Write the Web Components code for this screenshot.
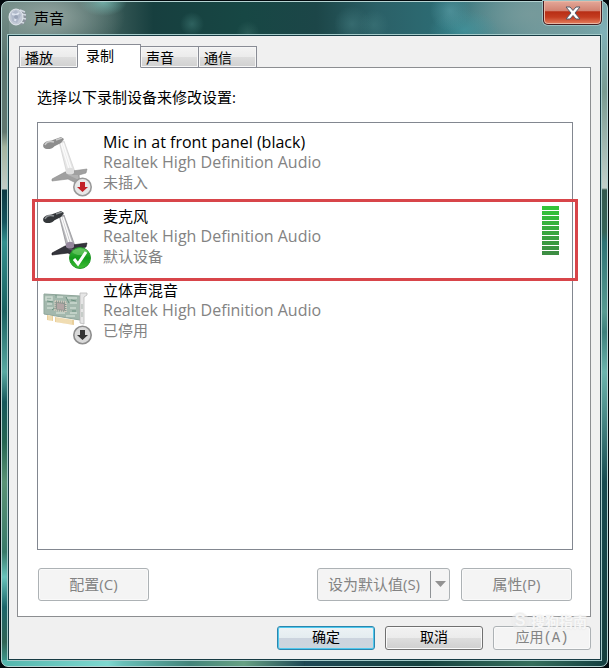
<!DOCTYPE html>
<html lang="zh-CN">
<head>
<meta charset="utf-8">
<title>声音</title>
<style>
  html { background: #02090d; }
  body { margin: 0; min-height: 100vh; display: flex; color: #000;
    font: 15px/20px "Open Sans", "Noto Sans CJK SC", sans-serif; }
</style>
</head>
<body>
<sound-window>
  <title-bar slot="title">声音</title-bar>
  <tab-strip slot="tabs">
    <tab-button>播放</tab-button>
    <tab-button selected>录制</tab-button>
    <tab-button>声音</tab-button>
    <tab-button>通信</tab-button>
  </tab-strip>
  <span slot="prompt">选择以下录制设备来修改设置:</span>
  <device-row icon="mic" state="unplugged" name="Mic in at front panel (black)" driver="Realtek High Definition Audio" status="未插入"></device-row>
  <device-row icon="mic" state="default" name="麦克风" driver="Realtek High Definition Audio" status="默认设备" level="10" marked></device-row>
  <device-row icon="card" state="disabled" name="立体声混音" driver="Realtek High Definition Audio" status="已停用"></device-row>
  <push-button slot="left" disabled>配置(C)</push-button>
  <split-button slot="right">设为默认值(S)</split-button>
  <push-button slot="right" disabled>属性(P)</push-button>
  <push-button slot="footer" kind="primary">确定</push-button>
  <push-button slot="footer" kind="dialog">取消</push-button>
  <push-button slot="footer" kind="dialog" disabled>应用(A)</push-button>
  <water-mark slot="mark">搜狗指南</water-mark>
</sound-window>

<script>
class Base extends HTMLElement {
  connectedCallback() {
    if (!this.shadowRoot) this.attachShadow({ mode: 'open' }).innerHTML = this.render();
  }
}

customElements.define('sound-window', class extends Base {
  render() { return `<style>
    :host { flex: 1; display: flex; flex-direction: column; margin: 1px; box-sizing: border-box; padding: 0 5px 5px;
      border: 1px solid #b5d3d2; border-radius: 7px; position: relative;
      background:
        linear-gradient(90deg, #53b5ac, #7ed8d0 35%, #69bfb8 40%, #42847a 62%, #67a184 80%, #1d4854) left bottom / 50% 6px no-repeat,
        linear-gradient(90deg, #1d4854, #164340 40%, #356e5c 75%, #123e40) right bottom / 50% 6px no-repeat,
        linear-gradient(#74a5a9 0, #80b1b8 30px, #799b91 90px, #c3d0cb 186px, #34594f 188px, #366458 230px, #2e7375 240px, #589b92 310px, #3d807c 330px, #6db5ae 370px, #174b50 480px, #163e3c) right top / 7px 100% no-repeat,
        linear-gradient(#77908a 0, #5a756f 60px, #61776f 130px, #a4b49f 145px, #c2ccc7 187px, #0d3a43 188px, #15545d 220px, #34918f 240px, #19605f 310px, #5aaaa3 370px, #16585b 400px, #256652 440px, #5b9376 480px, #397a69 550px, #68c4bc 575px, #1b666a 605px, #306455 640px, #42a69c) left top / 7px 100% no-repeat,
        radial-gradient(ellipse 75px 42px at 48px 15px, #a2b1acd0, transparent),
        radial-gradient(ellipse 24px 14px at 101px 0px, #66aaa3, transparent),
        radial-gradient(circle 12px at 190px 22px, #3c7470a0, transparent),
        radial-gradient(circle 12px at 246px 31px, #35676290, transparent),
        radial-gradient(circle 18px at 350px 22px, #40777ba0, transparent),
        radial-gradient(circle 15px at 372px 23px, #3f787b90, transparent),
        radial-gradient(circle 20px at 448px 9px, #579ba4b0, transparent),
        radial-gradient(ellipse 35px 20px at 462px 28px, #4599a2b0, transparent),
        radial-gradient(ellipse 90px 45px at 530px 12px, #769a9b, transparent),
        linear-gradient(90deg, #65827d, #3a5b58 18%, #173f3f 25%, #174744 40%, #1c4648 52%, #2b6067 62%, #2d7078 76%, #69969a 88%, #78a9ad); }
    .client { flex: 1; display: flex; flex-direction: column; background: #f0f0f0; padding: 8px 9px 9px 8px;
      border: 1px solid #173b43; outline: 1px solid #a5cbca; margin: 0 1px 1px; }
    main { flex: 1; display: flex; flex-direction: column; background: #fff; border: 1px solid #8c8e91; padding: 19px 17px 15px 19px; }
    .list { flex: 1; border: 1px solid #828790; margin: 15px 0 18px; padding-top: 9px; }
    .row { display: flex; justify-content: space-between; padding: 0 1px; }
    .group, footer { display: flex; gap: 11px; }
    footer { justify-content: flex-end; gap: 10px; padding-top: 9px; }
    </style>
    <slot name="title"></slot>
    <div class="client">
      <slot name="tabs"></slot>
      <main><slot name="prompt"></slot>
        <div class="list" role="list"><slot></slot></div>
        <div class="row"><slot name="left"></slot><div class="group"><slot name="right"></slot></div></div>
      </main>
      <footer><slot name="footer"></slot></footer>
    </div><slot name="mark"></slot>`; }
});

customElements.define('title-bar', class extends Base {
  render() { return `<style>
    :host { display: flex; height: 33px; align-items: flex-start; }
    .icon { width: 20px; height: 20px; margin: 5px 0 0 1px; }
    span { flex: 1; padding: 6px 0 0 6px; }
    button { width: 59px; height: 24px; margin: -1px 0 0; padding: 0; display: grid; place-items: center;
      border: 1px solid #461c20; border-top: 0; border-radius: 0 0 5px 5px;
      box-shadow: inset 0 0 0 1px #e9b6a4, 0 0 0 1px #9bc1c2;
      background: linear-gradient(#e4a899, #d28372 42%, #b82e15 47%, #c43c20 70%, #e58160); }
    </style>
    <svg class="icon" viewBox="0 0 20 20" aria-hidden="true">
      <path d="M9 2l6 1 3 4v7l-4 4-6-1z" fill="#8b939d"/>
      <path d="M12 3l5 2M13 7l5 1M13 11l5 1M12 15l4 1" stroke="#d3dae2" stroke-width="1.500"/>
      <ellipse cx="8" cy="10" rx="7" ry="8" fill="#c3cad6" stroke="#e3e9ee"/>
      <path d="M3 7l5-4 5 5-4 8-5-2z" fill="#b0b9ca"/><path d="M4 7l4 1 3-2M8 9l-1 5" stroke="#dde3ee" stroke-width="2" fill="none"/>
      <circle cx="8" cy="10" r="2" fill="#98a2b6"/>
    </svg>
    <span><slot></slot></span>
    <button aria-label="关闭"><svg width="16" height="14" viewBox="0 0 16 14"><path d="M1 1h4l3 3.500 3-3.500h4l-5 6 5 6h-4l-3-3.500-3 3.500h-4l5-6z" fill="#fff" stroke="#555a69" stroke-width="1"/></svg></button>`; }
});

customElements.define('tab-strip', class extends Base {
  render() { return `<style>:host { display: flex; align-items: flex-end; height: 24px; margin: 0 0 -1px 2px; z-index: 1; }</style><slot></slot>`; }
});

customElements.define('tab-button', class extends Base {
  render() { return `<style>
    :host { display: block; margin-right: -1px; z-index: 0; }
    button { display: block; width: 59px; height: 22px; text-align: left; padding: 0 0 2px 5px; border: 1px solid #898c95;
      background: linear-gradient(#f3f3f3, #ebebeb 50%, #dddddd 51%, #d0d0d0); box-shadow: inset 0 0 0 1px #f6f6f6;
      font: 14px/20px "Noto Sans CJK SC", sans-serif; color: #000; }
    :host([selected]) { z-index: 1; }
    :host([selected]) button { width: 64px; height: 24px; padding: 0 0 2px 8px; background: #fff; border-bottom-color: #fff; box-shadow: none; }
    </style><button role="tab" aria-selected="${this.hasAttribute('selected')}"><slot></slot></button>`; }
});

const mic = (light) => {
  const [head, hi, base, edge] = light ? ['#8d8d8d', '#c9c9c9', '#a0a0a0', '#8b8b8b'] : ['#34373a', '#8b8f92', '#34343c', '#15161a'];
  return `
    <path d="M21 9l5 0 11 31-8 2z" fill="${light ? '#e6e6e6' : '#b9b9bd'}" stroke="${light ? '#cecece' : '#8a8a8e'}" stroke-width=".7"/>
    <path d="M23 11l9 29M25 11l9 28" stroke="#fafafa" stroke-width="1.500"/>
    <path d="M14 47l13-7 22-3-1 4-7 2 1 8-2 1-10-5-16 2z" fill="${base}" stroke="${edge}" stroke-width=".6"/>
    <path d="M28 38c2-3 7-3 8 0l0 3c-2 2-6 2-8 0z" fill="${light ? '#dedede' : '#94869c'}"/>
    <path d="M30 43l10 0 1 5z" fill="${light ? '#b3b3b3' : '#564e60'}"/>
    <path d="M12 9l11-4 3 2-3 4-10 5z" fill="${head}"/>
    <ellipse cx="11" cy="13" rx="6" ry="4" transform="rotate(-12 11 13)" fill="${head}"/>
    <path d="M7 13c2-4 6-4 9-3M18 8l6-2" stroke="${hi}" stroke-width="1.500" fill="none"/>`;
};
const card = `
    <path d="M6 14l36 2v24l-36-6z" fill="#a3b8ad" stroke="#8fa69a"/>
    <path d="M8 17h6v3H8zM17 17h8M29 18h10M9 24h5M9 28h6M32 23h7M32 28h6M32 33h7M18 33h9M28 36h9" stroke="#ccd9d0" stroke-width="1.500" fill="none"/>
    <path d="M9 21l6 1M18 15v3M28 17l3 6M14 30l4-3M33 20l5 1M34 31l4 0" stroke="#6b9180" fill="none"/>
    <path d="M17 21l11 1v10l-11-2z" fill="#8c9690" stroke="#d0c9bd" stroke-dasharray="1 1" stroke-width="2"/>
    <path d="M19 23l7 1v6l-7-1z" fill="#b3a6a5"/>
    <path d="M9 35l6 1v5l-6-1zM17 37l19 3v5l-19-3z" fill="#e9cf9b"/>
    <path d="M11 35v5M13 36v5M19 37v5M21 37v6M23 38v5M25 38v5M27 38v6M29 39v5M31 39v5M33 39v5" stroke="#fff5dc" stroke-width=".7"/>
    <path d="M42 13h7v2l-3 2v27l-4-1z" fill="#e6e6e6" stroke="#b9b9b9" stroke-width=".8"/>
    <path d="M44 24v5M44 32v5" stroke="#a7b3ab"/>`;
const badges = {
  unplugged: `<circle cx="44.500" cy="55" r="8.700" fill="#e8e8e8" stroke="#999" stroke-width="1.600"/><path d="M42 50h5v5h3l-5.500 5-5.500-5h3z" fill="#c32027"/>`,
  disabled: `<circle cx="44.500" cy="55" r="8.700" fill="#d9d9d9" stroke="#8d8d8d" stroke-width="1.600"/><path d="M42 50h5v5h3l-5.500 5-5.500-5h3z" fill="#333"/>`,
  default: `<circle cx="42" cy="52" r="10.500" fill="url(#g)" stroke="#259a2a"/><path d="M34 46c4-5 13-5 16 0-3 3-11 5-16 0z" fill="#7fd576" opacity=".5"/><path d="M36 53l4 5 8-12" fill="none" stroke="#fff" stroke-width="3"/>`
};

customElements.define('device-icon', class extends Base {
  render() { const s = this.getAttribute('state');
    return `<style>:host, svg { display: block; width: 65px; height: 70px; }</style>
    <svg viewBox="0 0 65 70" aria-hidden="true"><defs><linearGradient id="g" x2="0" y2="1"><stop stop-color="#4bb94b"/><stop offset=".5" stop-color="#129b1b"/><stop offset="1" stop-color="#3fbe35"/></linearGradient></defs>
    ${this.getAttribute('icon') === 'card' ? card : mic(s === 'unplugged')}${badges[s]}</svg>`; }
});

customElements.define('level-meter', class extends Base {
  render() {
    return `<style>:host { display: grid; gap: 1px; width: 17px; margin-right: 13px; } i { height: 4px; }</style>` +
      Array.from({ length: +this.getAttribute('level') }, (_, n) => `<i style="background:rgb(${52 + n},${196 - n * 6},${58 + n})"></i>`).join('');
  }
});

customElements.define('device-row', class extends Base {
  connectedCallback() { this.setAttribute('role', 'listitem'); super.connectedCallback(); }
  render() { const a = (n) => this.getAttribute(n);
    const latin = (s) => /^[\x20-\x7e]+$/.test(s) ? 'latin' : '';
    return `<style>
    :host { display: flex; align-items: flex-start; height: 74px; position: relative; }
    .text { flex: 1; } .sub { color: #838383; } .latin { font-size: 16px; }
    .mark { position: absolute; inset: -7px -6px -1px -6px; border: 3px solid #d8454a; pointer-events: none; }
    </style>
    <device-icon icon="${a('icon')}" state="${a('state')}"></device-icon>
    <div class="text"><div class="${latin(a('name'))}">${a('name')}</div><div class="sub ${latin(a('driver'))}">${a('driver')}</div><div class="sub">${a('status')}</div></div>
    ${a('level') ? `<level-meter level="${a('level')}" role="meter" aria-label="${a('name')}" aria-valuenow="10" aria-valuemax="10"></level-meter>` : ''}
    ${this.hasAttribute('marked') ? '<div class="mark"></div>' : ''}`; }
});

customElements.define('push-button', class extends Base {
  render() { return `<style>
    :host { display: block; }
    button { display: block; width: 111px; height: 33px; padding: 0 0 2px; border: 1px solid #707070; border-radius: 3px; color: #000; font: inherit;
      background: linear-gradient(#f2f2f2, #ebebeb 50%, #dddddd 51%, #cfcfcf); box-shadow: inset 0 0 0 1px #fafafa; }
    :host([kind]) button { width: 98px; height: 24px; padding: 0; font: 14px/20px "Liberation Mono", "Noto Sans CJK SC", monospace; }
    :host([kind=primary]) button { border-color: #2c86ad; box-shadow: inset 0 0 0 1px #4fc8ee; background: linear-gradient(#edf3f5, #e4ecf0 50%, #ccd4de 51%, #cbd6de); }
    :host([disabled]) button { background: #f4f4f4; border-color: #adb2b5; color: #838383; }
    </style><button ${this.hasAttribute('disabled') ? 'disabled' : ''}><slot></slot></button>`; }
});

customElements.define('split-button', class extends Base {
  render() { return `<style>
    :host { display: flex; align-items: center; box-sizing: border-box; width: 133px; height: 33px; border: 1px solid #adb2b5; border-radius: 3px; background: #f4f4f4; }
    button { border: 0; padding: 0 0 2px; background: none; color: #838383; font: inherit; height: 27px; }
    .main { flex: 1; border-right: 1px solid #8f9396; } .drop { width: 18px; display: grid; place-items: center; }
    </style><button class="main" disabled><slot></slot></button>
    <button class="drop" disabled aria-label="更多选项"><svg width="11" height="6" viewBox="0 0 11 6"><path d="M0 0h11l-5.500 6z" fill="#929292"/></svg></button>`; }
});

customElements.define('water-mark', class extends Base {
  render() { return `<style>
    :host { position: absolute; right: 20px; bottom: 36px; display: flex; align-items: center; gap: 2px; font: bold 14px/18px "Noto Sans CJK SC", sans-serif;
      color: #f7f7f7; text-shadow: 0 0 2px #dcdcdc; pointer-events: none; }
    b { font: bold 16px/18px "Liberation Sans", sans-serif; width: 18px; border-radius: 9px; text-align: center; background: #ececec80; }
    </style><b>S</b><slot></slot>`; }
});
</script>
</body>
</html>
